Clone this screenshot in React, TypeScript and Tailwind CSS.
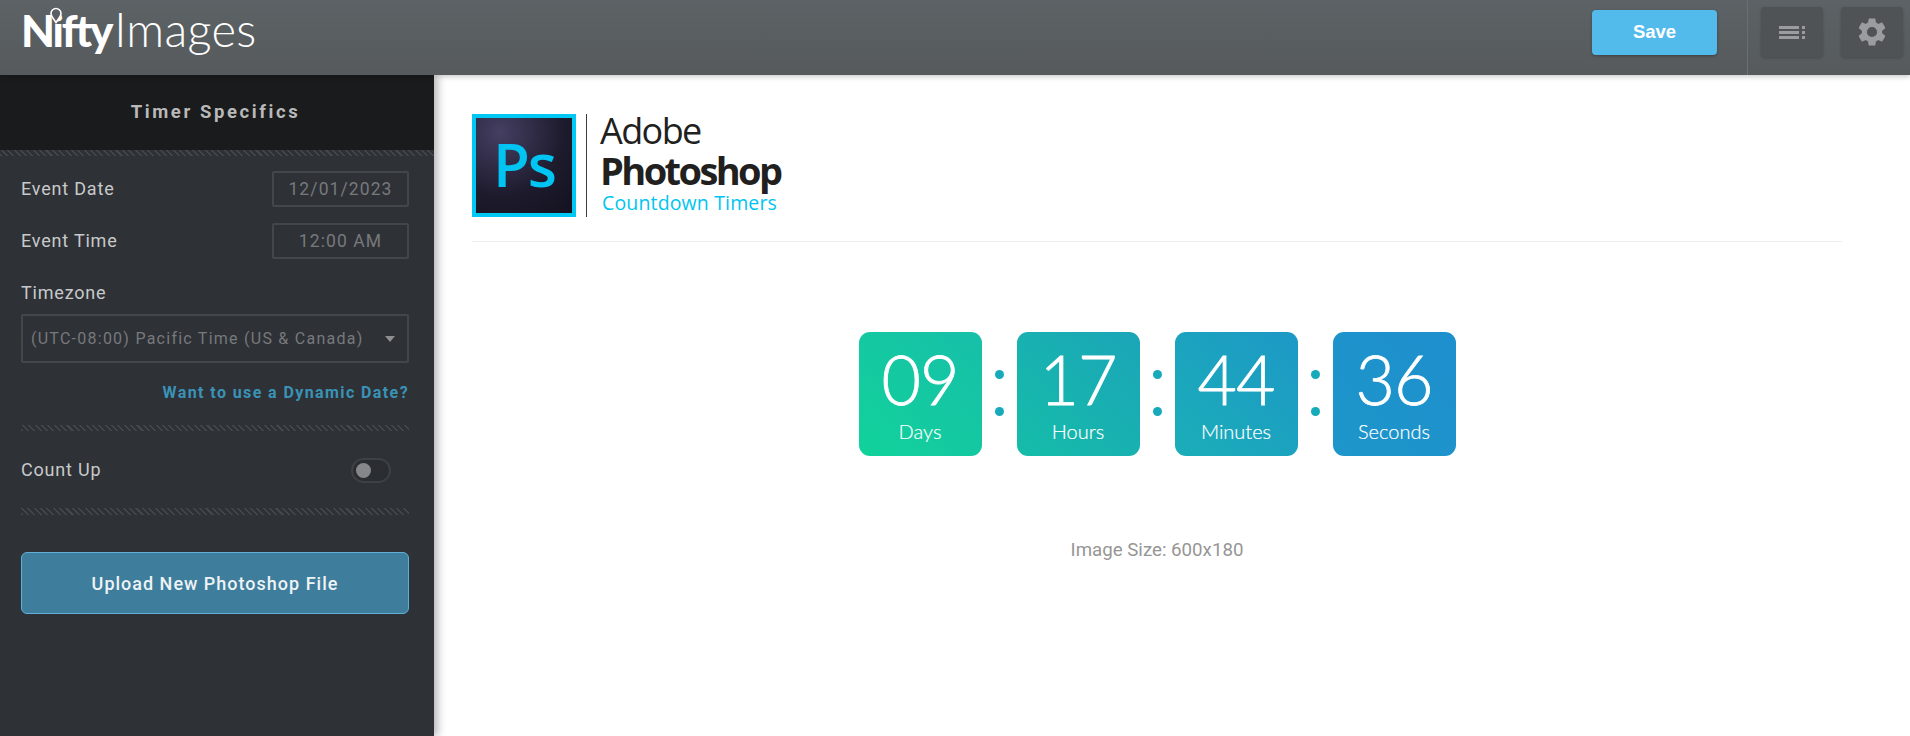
import React from 'react'

const hatch =
  'bg-[repeating-linear-gradient(45deg,#44474c_0px,#44474c_1.5px,transparent_1.5px,transparent_4.5px)]'

const units = [
  { value: '09', label: 'Days', bg: 'bg-[linear-gradient(45deg,#11d29a,#17bfa9)]' },
  { value: '17', label: 'Hours', bg: 'bg-[linear-gradient(45deg,#15bda9,#1ba5b8)]' },
  { value: '44', label: 'Minutes', bg: 'bg-[linear-gradient(45deg,#1aaeb8,#1d98c6)]' },
  { value: '36', label: 'Seconds', bg: 'bg-[linear-gradient(45deg,#1d96ca,#1e8fcd)]' },
]

const FieldRow = ({ label, value }: { label: string; value: string }) => (
  <div className="flex items-center justify-between">
    <span className="pb-[2px] text-[18px] tracking-[0.8px] text-[#c8c9ca]">{label}</span>
    <div className="flex h-[36px] w-[137px] items-center justify-center rounded-[2px] border-2 border-[#43464b] pt-[1px] text-[17.5px] tracking-[1.1px] text-[#77797c]">
      {value}
    </div>
  </div>
)

const Sidebar = () => (
  <aside className="relative z-10 flex w-[434px] shrink-0 flex-col bg-[#2e3136] shadow-[4px_0_8px_rgba(0,0,0,0.28)]">
    <div className="flex h-[75px] items-center justify-center bg-[#1a1b1d] pr-[3px] text-[18.5px] font-bold tracking-[2.6px] text-[#b9b9b9]">
      Timer Specifics
    </div>
    <div className={`h-[6px] ${hatch}`} />
    <div className="flex flex-col pl-[21px] pr-[25px] pt-[15px]">
      <div className="flex flex-col gap-[16px]">
        <FieldRow label="Event Date" value="12/01/2023" />
        <FieldRow label="Event Time" value="12:00 AM" />
      </div>
      <label className="mt-[22px] text-[18px] leading-[24px] tracking-[0.8px] text-[#c8c9ca]">Timezone</label>
      <div className="mt-[9px] flex h-[49px] items-center justify-between rounded-[2px] border-2 border-[#43464b] pl-[8px] pr-[12px]">
        <span className="text-[16px] tracking-[1.25px] text-[#77797c]">(UTC-08:00) Pacific Time (US &amp; Canada)</span>
        <span className="h-0 w-0 border-x-[5px] border-t-[6px] border-x-transparent border-t-[#8c8e90]" />
      </div>
      <a className="mt-[20px] text-right text-[16px] font-bold leading-[20px] tracking-[1.4px] text-[#3a93b6]">
        Want to use a Dynamic Date?
      </a>
      <div className={`mt-[22px] h-[6px] ${hatch}`} />
      <div className="mt-[27px] flex h-[25px] items-center justify-between pr-[18px]">
        <span className="pb-[2px] text-[18px] tracking-[0.8px] text-[#c8c9ca]">Count Up</span>
        <div className="flex h-[25px] w-[40px] items-center rounded-full border-2 border-[#3d4045] bg-[#2a2d31] pl-[3px]">
          <span className="h-[15px] w-[15px] rounded-full bg-[#86878a]" />
        </div>
      </div>
      <div className={`mt-[25px] h-[7px] ${hatch}`} />
      <button className="mt-[37px] h-[62px] rounded-[6px] border border-[#62aed6] bg-[#3e7d9c] text-[18px] font-medium tracking-[1px] text-[#eef3f6]">
        Upload New Photoshop File
      </button>
    </div>
  </aside>
)

const Header = () => (
  <header className="relative z-20 flex h-[75px] shrink-0 items-start justify-between bg-[linear-gradient(180deg,#5c6265,#565a5d)] shadow-[0_2px_5px_rgba(0,0,0,0.2)]">
    <div className="relative ml-[21px] mt-[7px] flex items-baseline text-[44px] leading-[44px] text-white [font-family:Lato,sans-serif]">
      <span className="font-black tracking-[-2.2px]">Nifty</span>
      <span className="ml-[3px] text-[47px] font-light tracking-[0.3px]">Images</span>
      <svg className="absolute left-[28px] top-[0px]" width="14" height="17" viewBox="0 0 14 17" fill="none">
        <path d="M7 15.5 C4 11 2 9 2 6.5 A5 5 0 0 1 12 6.5 C12 9 10 11 7 15.5 Z" fill="#5b6064" stroke="#fff" strokeWidth="1.6" />
      </svg>
    </div>
    <div className="flex h-full items-start">
      <button className="mr-[30px] mt-[10px] h-[45px] w-[125px] rounded-[4px] bg-[#53bbec] pb-[2px] text-[18.5px] font-bold text-white shadow-[0_1px_3px_rgba(0,0,0,0.3)] [font-family:'Liberation_Sans',sans-serif]">
        Save
      </button>
      <div className="flex h-full items-start gap-[18px] border-l border-[#6a6f72] pl-[13px] pr-[7px] pt-[7px]">
        <button className="flex h-[50px] w-[62px] items-center justify-center rounded-[4px] bg-[#505356] shadow-[0_1px_3px_rgba(0,0,0,0.2)]">
          <svg width="26" height="15" viewBox="0 0 26 15" fill="#9a9c9e">
            <rect x="0" y="1" width="20" height="3" />
            <rect x="0" y="6" width="20" height="3" />
            <rect x="0" y="11" width="20" height="3" />
            <rect x="23" y="1" width="3" height="3" />
            <rect x="23" y="6" width="3" height="3" />
            <rect x="23" y="11" width="3" height="3" />
          </svg>
        </button>
        <button className="flex h-[50px] w-[62px] items-center justify-center rounded-[4px] bg-[#505356] shadow-[0_1px_3px_rgba(0,0,0,0.2)]">
          <svg width="34" height="34" viewBox="0 0 24 24" fill="#9a9c9e">
            <path d="M19.14 12.94c.04-.3.06-.61.06-.94 0-.32-.02-.64-.07-.94l2.03-1.58a.49.49 0 0 0 .12-.61l-1.92-3.32a.49.49 0 0 0-.59-.22l-2.39.96a7.03 7.03 0 0 0-1.62-.94l-.36-2.54a.48.48 0 0 0-.48-.41h-3.84a.48.48 0 0 0-.47.41l-.36 2.54c-.59.24-1.13.57-1.62.94l-2.39-.96a.49.49 0 0 0-.59.22L2.74 8.87a.48.48 0 0 0 .12.61l2.03 1.58c-.05.3-.09.63-.09.94s.02.64.07.94l-2.03 1.58a.49.49 0 0 0-.12.61l1.92 3.32c.12.22.37.29.59.22l2.39-.96c.5.38 1.03.7 1.62.94l.36 2.54c.05.24.24.41.48.41h3.84c.24 0 .44-.17.47-.41l.36-2.54c.59-.24 1.13-.56 1.62-.94l2.39.96c.22.08.47 0 .59-.22l1.92-3.32a.48.48 0 0 0-.12-.61l-2.01-1.58zM12 15.6A3.6 3.6 0 1 1 12 8.4a3.6 3.6 0 0 1 0 7.2z" />
          </svg>
        </button>
      </div>
    </div>
  </header>
)

const PhotoshopLogo = () => (
  <div className="flex h-[103px] items-stretch [font-family:'Open_Sans',sans-serif]">
    <div className="flex h-[103px] w-[104px] items-center justify-center border-[4px] border-[#00c8f5] bg-[radial-gradient(circle_at_25%_15%,#453f62,#1d1a2c_60%,#14121f)] pb-[4px] text-[60px] font-semibold leading-none tracking-[-2px] text-[#00c4f2]">
      Ps
    </div>
    <div className="ml-[10px] w-px bg-[#3c3c3c]" />
    <div className="ml-[13px] flex flex-col">
      <span className="-mt-[1px] h-[36px] text-[36px] leading-[36px] tracking-[-1.6px] text-[#221f1f]">Adobe</span>
      <span className="h-[43px] text-[38px] font-bold leading-[42px] tracking-[-2.6px] text-[#221f1f]">Photoshop</span>
      <span className="ml-[2px] text-[19.5px] leading-[22px] tracking-[0.15px] text-[#00c4f2]">Countdown Timers</span>
    </div>
  </div>
)

const Colon = () => (
  <div className="flex w-[35px] flex-col items-center gap-[28px] pb-[2px]">
    <span className="h-[9px] w-[9px] rounded-full bg-[#16aabb]" />
    <span className="h-[9px] w-[9px] rounded-full bg-[#16aabb]" />
  </div>
)

const Timer = () => (
  <div className="mt-[90px] flex items-center justify-center [font-family:Lato,sans-serif]">
    {units.map((u, i) => (
      <React.Fragment key={u.label}>
        {i > 0 && <Colon />}
        <div className={`flex h-[124px] w-[123px] flex-col items-center rounded-[11px] ${u.bg} text-white`}>
          <span className="mt-[9px] text-[68px] font-light leading-[76px] tracking-[-1px] [-webkit-text-stroke:0.8px_white]">{u.value}</span>
          <span className="mt-[3px] text-[20px] font-light leading-[22px] [-webkit-text-stroke:0.2px_white]">{u.label}</span>
        </div>
      </React.Fragment>
    ))}
  </div>
)

const App = () => (
  <div className="flex h-[736px] w-full flex-col overflow-hidden bg-white [font-family:Roboto,sans-serif]">
    <Header />
    <div className="flex flex-1">
      <Sidebar />
      <main className="flex-1 pl-[38px] pr-[70px] pt-[39px]">
        <PhotoshopLogo />
        <div className="mt-[24px] h-px w-[1370px] bg-[#eeeeee]" />
        <Timer />
        <p className="mt-[84px] text-center text-[18.7px] leading-[20px] text-[#969696]">Image Size: 600x180</p>
      </main>
    </div>
  </div>
)

export default App
